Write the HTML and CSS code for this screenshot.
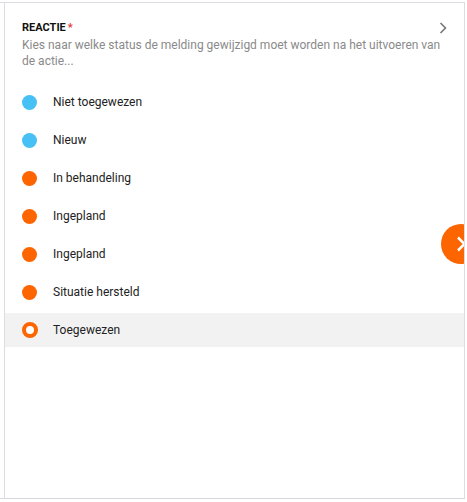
FILE: index.html
```html
<!DOCTYPE html>
<html lang="nl">
<head>
<meta charset="utf-8">
<title>Reactie</title>
<link rel="stylesheet" href="styles.css">
</head>
<body>
<div class="page">
  <div class="panel">
    <div class="header">
      <div class="title-row">
        <div class="title">REACTIE<span class="req">*</span></div>
        <svg class="header-chev" width="8" height="12" viewBox="0 0 8 12"><path d="M1.5 1 L6.5 6 L1.5 11" fill="none" stroke="#767676" stroke-width="1.6"/></svg>
      </div>
      <div class="subtitle">Kies naar welke status de melding gewijzigd moet worden na het uitvoeren van de actie...</div>
    </div>
    <ul class="list">
      <li class="item"><span class="dot blue"></span><span class="label">Niet toegewezen</span></li>
      <li class="item"><span class="dot blue"></span><span class="label">Nieuw</span></li>
      <li class="item"><span class="dot orange"></span><span class="label">In behandeling</span></li>
      <li class="item"><span class="dot orange"></span><span class="label">Ingepland</span></li>
      <li class="item"><span class="dot orange"></span><span class="label">Ingepland</span></li>
      <li class="item"><span class="dot orange"></span><span class="label">Situatie hersteld</span></li>
      <li class="item selected"><span class="dot ring"></span><span class="label">Toegewezen</span></li>
    </ul>
    <div class="fab">
      <svg width="12" height="16" viewBox="0 0 12 16"><path d="M3 1.5 L9.5 8 L3 14.5" fill="none" stroke="#ffffff" stroke-width="2.6"/></svg>
    </div>
  </div>
</div>
</body>
</html>
```

FILE: styles.css
```css
html, body {
  margin: 0;
  padding: 0;
  background: #ffffff;
}
body {
  font-family: Roboto, "Liberation Sans", Arial, sans-serif;
  width: 467px;
  height: 502px;
  overflow: hidden;
}
.page {
  margin-top: 2px;
  width: 465px;
  border-top: 1px solid #dcdce4;
  border-bottom: 1px solid #d6d6dc;
  box-sizing: border-box;
  height: 497px;
}
.panel {
  margin-left: 4px;
  width: 461px;
  height: 496px;
  box-sizing: border-box;
  border-left: 1px solid #dcdce4;
  border-right: 1px solid #dcdce4;
  position: relative;
  overflow: hidden;
}
.header {
  padding: 18px 15px 0 17px;
}
.title-row {
  display: flex;
  justify-content: space-between;
  align-items: flex-start;
  padding-right: 2px;
}
.title {
  font-size: 11px;
  line-height: 13px;
  font-weight: 700;
  color: #111111;
}
.req {
  color: #e53935;
  margin-left: 2px;
  font-weight: 700;
}
.subtitle {
  margin-top: 3px;
  font-size: 12px;
  line-height: 16px;
  color: #8a8a8a;
}
.header-chev {
  margin-top: 1px;
  flex: none;
}
.list {
  list-style: none;
  margin: 16px 0 0 0;
  padding: 0;
  display: flex;
  flex-direction: column;
  gap: 4px;
}
.item {
  height: 34px;
  display: flex;
  align-items: center;
  padding-left: 17px;
  font-size: 12px;
  color: #222222;
}
.item.selected {
  background: #f2f2f2;
}
.dot {
  width: 15px;
  height: 15px;
  border-radius: 50%;
  box-sizing: border-box;
  flex: none;
  margin-right: 16px;
}
.dot.blue {
  background: #47c0f6;
}
.dot.orange {
  background: #fd6500;
}
.dot.ring {
  width: 16px;
  height: 16px;
  background: #ffffff;
  border: 4.5px solid #fd6500;
  margin-right: 15px;
}
.fab {
  position: absolute;
  left: 436px;
  top: 221px;
  width: 40px;
  height: 40px;
  border-radius: 50%;
  background: #fd6500;
  display: flex;
  align-items: center;
  justify-content: flex-start;
  padding-left: 14px;
  box-sizing: border-box;
}
```
